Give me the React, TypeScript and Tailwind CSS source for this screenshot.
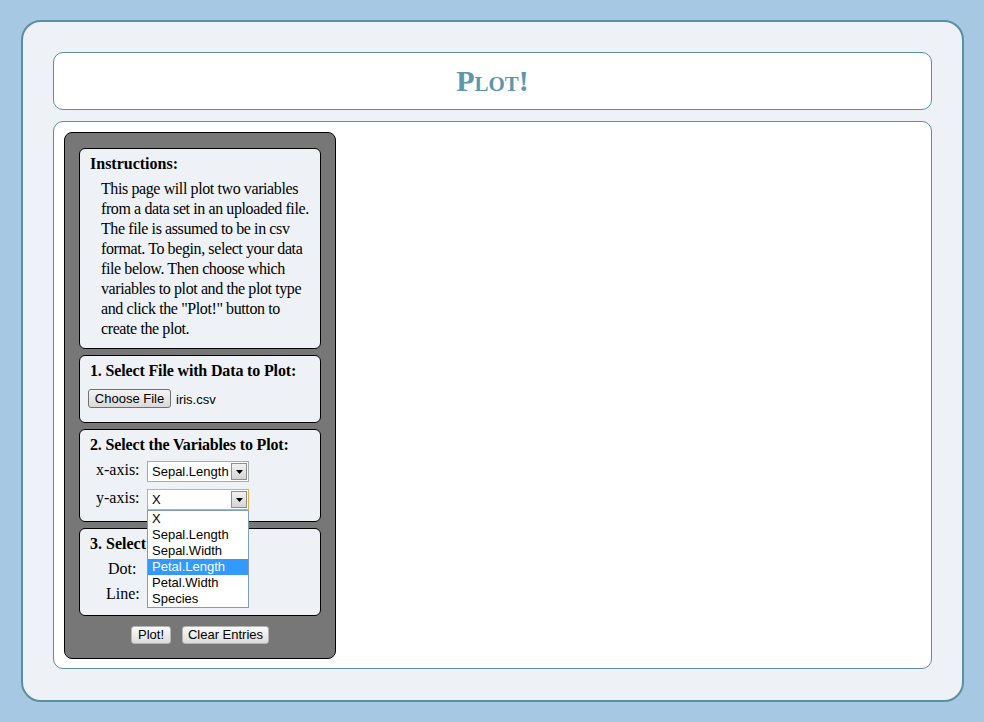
import React from 'react';

const serif = { fontFamily: '"Liberation Serif", "Times New Roman", serif' };
const sans = { fontFamily: '"Liberation Sans", Arial, sans-serif' };

const instructionLines = [
  'This page will plot two variables',
  'from a data set in an uploaded file.',
  'The file is assumed to be in csv',
  'format. To begin, select your data',
  'file below. Then choose which',
  'variables to plot and the plot type',
  'and click the "Plot!" button to',
  'create the plot.',
];

function FakeSelect({ value, focused }: { value: string; focused?: boolean }) {
  return (
    <div
      className={`flex items-center w-[102px] h-[21px] bg-white border ${focused ? 'border-[#e0b050]' : 'border-[#a5acb2]'} text-[13px] text-black`}
      style={sans}
    >
      <span className="flex-1 pl-[4px] leading-[19px] whitespace-nowrap overflow-hidden">{value}</span>
      <span className="w-[16px] h-[17px] mr-[1px] flex items-center justify-center border border-[#8f8f8f] bg-gradient-to-b from-[#f2f2f2] to-[#d4d4d4]">
        <svg width="7" height="4" viewBox="0 0 7 4"><path d="M0 0h7L3.5 4z" fill="#000" /></svg>
      </span>
    </div>
  );
}

function Btn({ children, w }: { children: React.ReactNode; w: string }) {
  return (
    <button
      className={`${w} h-[18px] leading-[16px] text-[13px] text-black border border-[#b5b5b5] rounded-[3px] bg-gradient-to-b from-[#fbfbfb] to-[#dcdcdc]`}
      style={sans}
    >
      {children}
    </button>
  );
}

export default function App() {
  const options = ['X', 'Sepal.Length', 'Sepal.Width', 'Petal.Length', 'Petal.Width', 'Species'];

  return (
    <main className="min-h-[722px] bg-[#a6c8e2] pt-[20px] pl-[21px] pr-[20px] pb-[20px]" style={serif}>
      <div className="w-[943px] h-[682px] bg-[#eef2f7] border-2 border-[#5a8fa1] rounded-[20px] pt-[30px] px-[30px] flex flex-col gap-[11px]">
        {/* header */}
        <div className="h-[58px] bg-white border border-[#5a8fa1] rounded-[10px] flex items-center justify-center">
          <h1 className="text-[30px] font-bold text-[#5d97ad] leading-none" style={{ ...serif, fontVariant: 'small-caps' }}>
            Plot!
          </h1>
        </div>

        {/* main */}
        <div className="h-[548px] bg-white border border-[#5a8fa1] rounded-[10px] p-[10px]">
          <div className="relative w-[272px] h-[527px] bg-[#777777] border border-black rounded-[8px] pt-[15px] px-[14px] flex flex-col gap-[6px] text-black text-[16px] leading-[20px]">
            {/* instructions */}
            <div className="bg-[#eef2f7] border border-black rounded-[6px] pt-[5px] pb-[9px] px-[10px]">
              <div className="font-bold">Instructions:</div>
              <p className="mt-[5px] ml-[11px] tracking-[-0.4px]">
                {instructionLines.map(l => (
                  <span key={l} className="block whitespace-nowrap">{l}</span>
                ))}
              </p>
            </div>

            {/* file */}
            <div className="bg-[#eef2f7] border border-black rounded-[6px] pt-[5px] pb-[12px] px-[8px]">
              <div className="font-bold pl-[2px] tracking-[-0.15px]">1. Select File with Data to Plot:</div>
              <div className="mt-[6px] flex items-center gap-[5px]">
                <button
                  className="w-[83px] h-[19px] leading-[17px] text-[13px] text-black border border-[#707070] rounded-[3px] bg-gradient-to-b from-[#f4f4f4] to-[#d9d9d9]"
                  style={sans}
                >
                  Choose File
                </button>
                <span className="text-[13px] mt-[3px]" style={sans}>iris.csv</span>
              </div>
            </div>

            {/* variables */}
            <div className="bg-[#eef2f7] border border-black rounded-[6px] pt-[5px] pb-[11px] px-[10px]">
              <div className="font-bold tracking-[-0.15px]">2. Select the Variables to Plot:</div>
              <div className="mt-[6px] flex items-start">
                <span className="w-[57px] pl-[6px] leading-[17px]">x-axis:</span>
                <FakeSelect value="Sepal.Length" />
              </div>
              <div className="mt-[7px] flex items-start">
                <span className="w-[57px] pl-[6px] leading-[17px]">y-axis:</span>
                <FakeSelect value="X" focused />
              </div>
            </div>

            {/* plot type */}
            <div className="bg-[#eef2f7] border border-black rounded-[6px] pt-[5px] pb-[11px] px-[10px]">
              <div className="font-bold">3. Select Plot Type:</div>
              <div className="mt-[5px] flex items-center h-[20px]">
                <span className="w-[57px] pl-[18px]">Dot:</span>
                <FakeSelect value="" />
              </div>
              <div className="mt-[5px] flex items-center h-[20px]">
                <span className="w-[57px] pl-[16px]">Line:</span>
                <FakeSelect value="" />
              </div>
            </div>

            {/* buttons */}
            <div className="mt-[4px] flex justify-center gap-[11px]">
              <Btn w="w-[40px]">Plot!</Btn>
              <Btn w="w-[87px]">Clear Entries</Btn>
            </div>

            {/* open dropdown list */}
            <div
              className="absolute left-[82px] top-[377px] w-[102px] bg-white border border-[#7f9db9] text-[13px] leading-[16px]"
              style={sans}
            >
              {options.map(o => (
                <div
                  key={o}
                  className={`h-[16px] pl-[4px] ${o === 'Petal.Length' ? 'bg-[#3399ff] text-white' : 'text-black'}`}
                >
                  {o}
                </div>
              ))}
            </div>
          </div>
        </div>
      </div>
    </main>
  );
}
